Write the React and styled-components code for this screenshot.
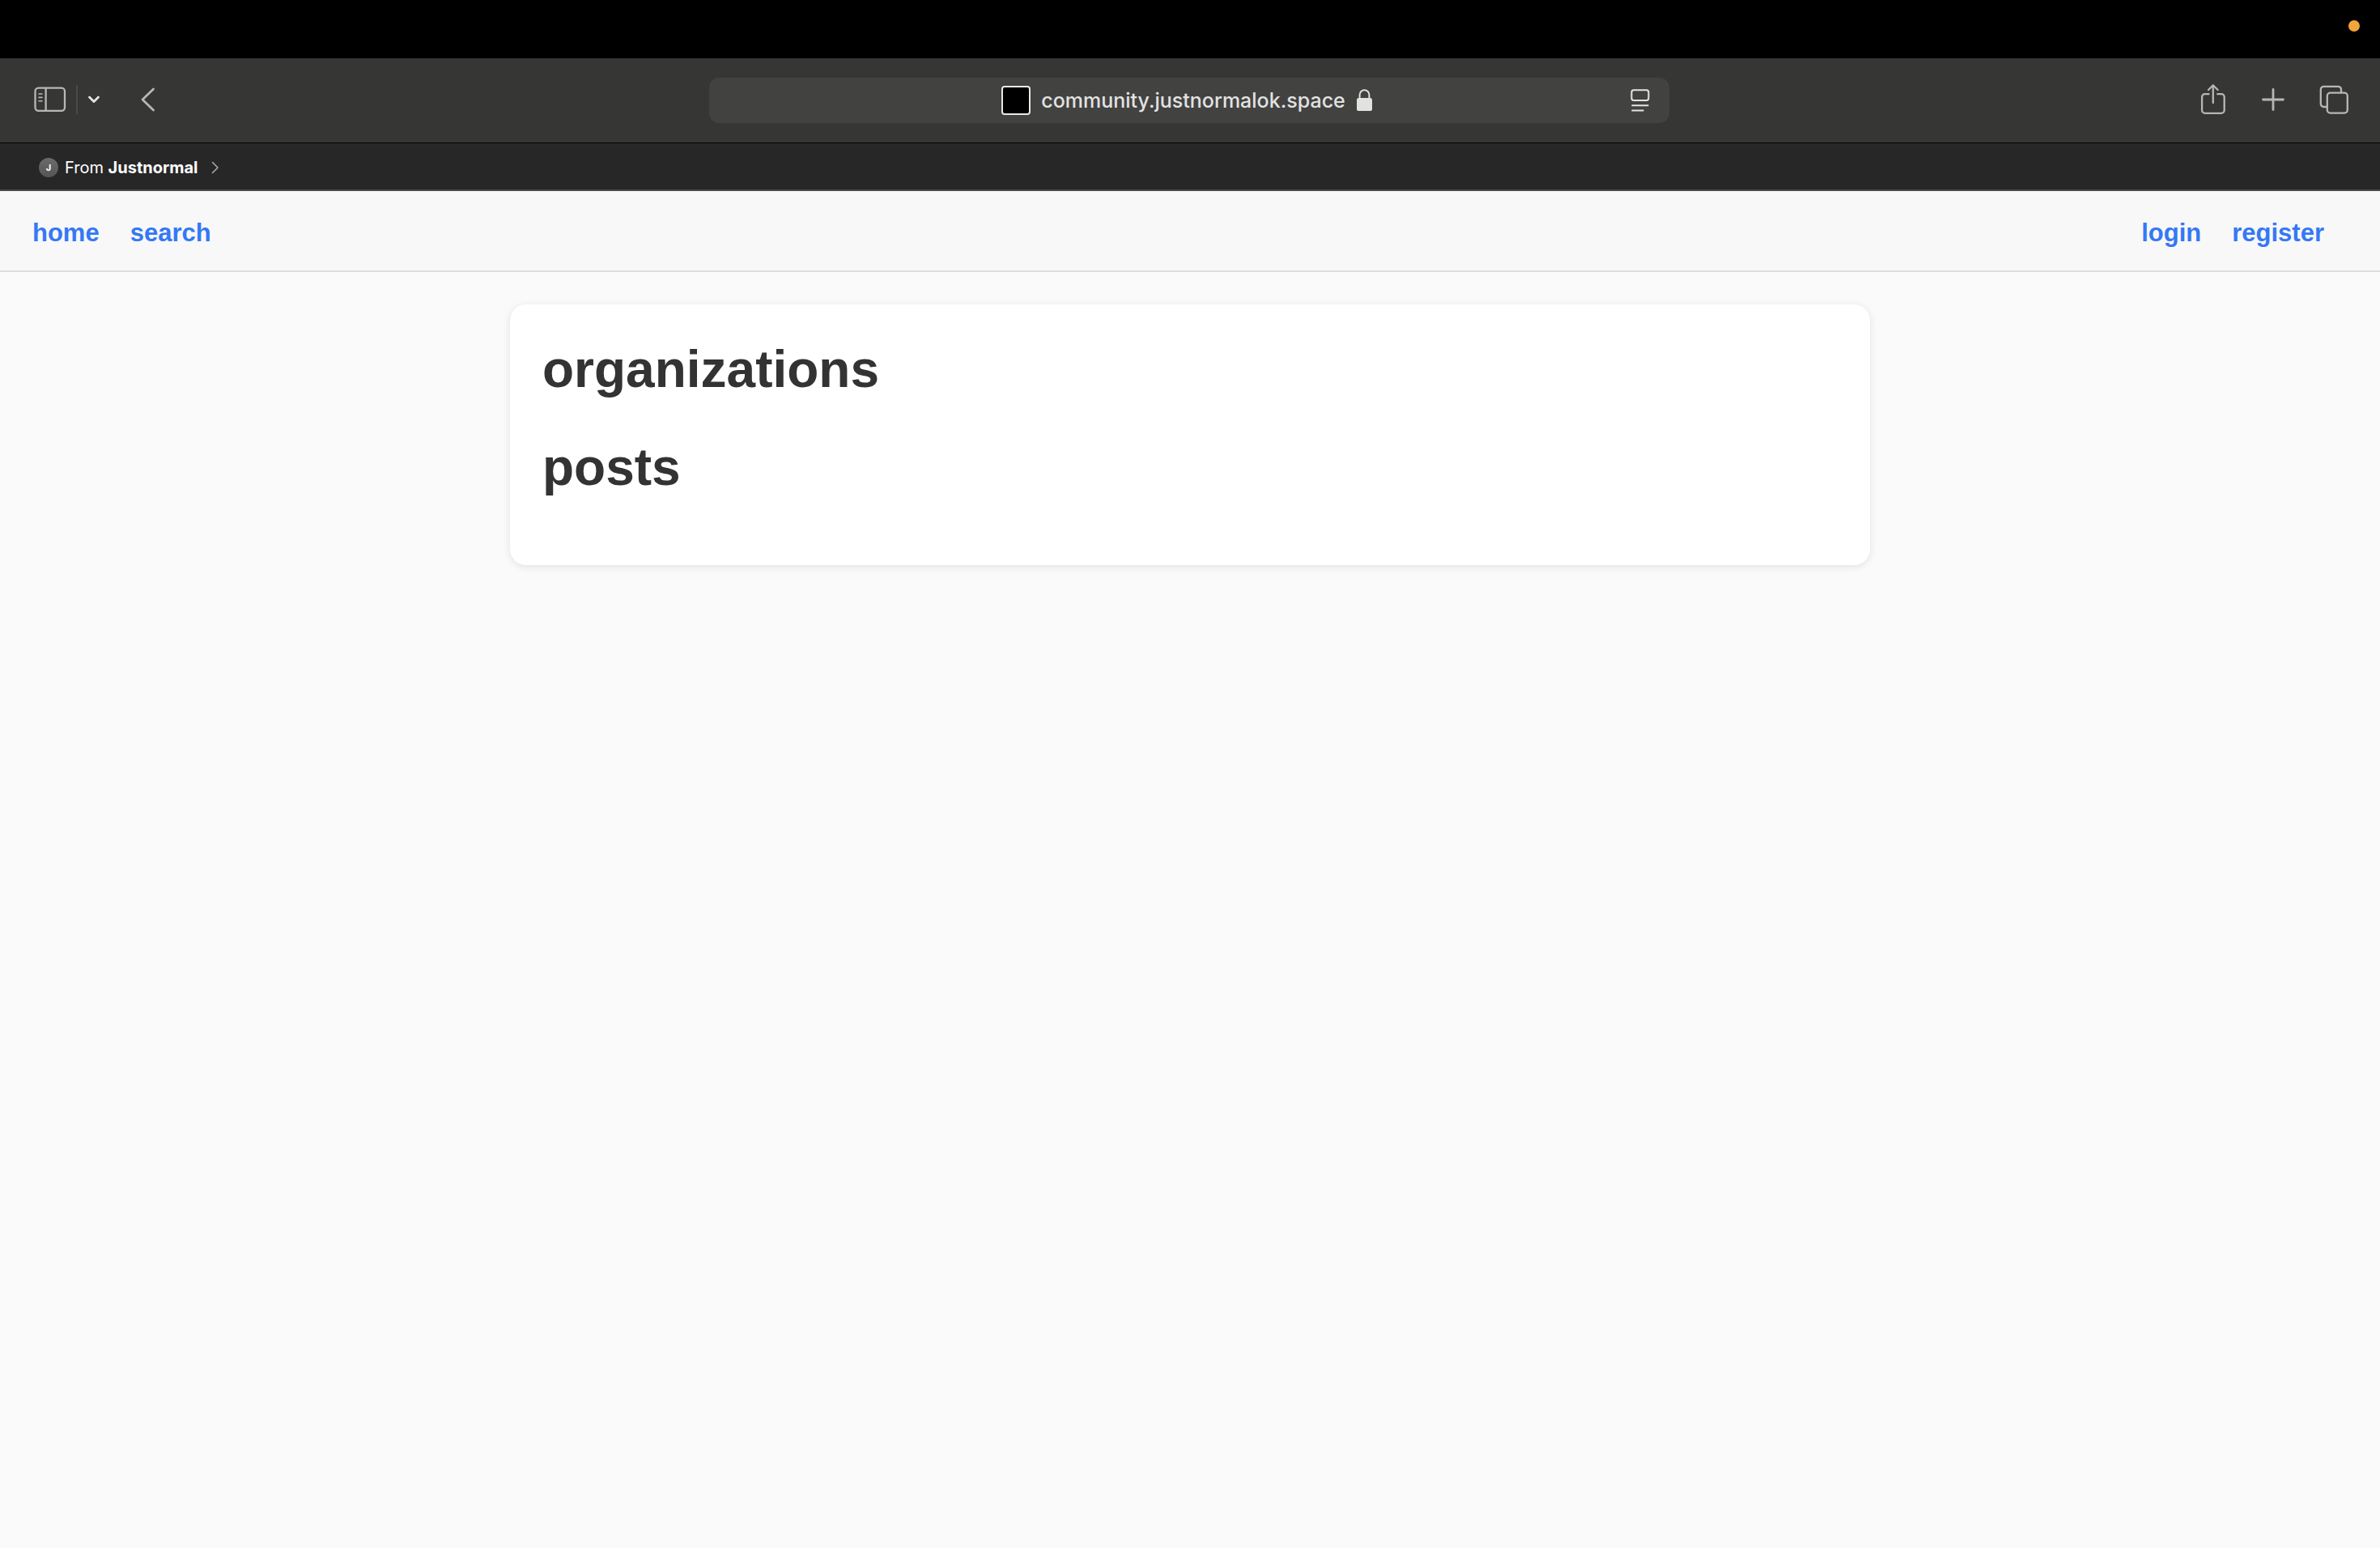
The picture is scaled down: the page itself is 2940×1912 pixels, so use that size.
import React from "react";
import styled, { createGlobalStyle } from "styled-components";

const GlobalStyle = createGlobalStyle`
  * {
    box-sizing: border-box;
  }
  body {
    margin: 0;
    background: #fafafa;
    font-family: "Liberation Sans", Arial, sans-serif;
    color: #333333;
  }
`;

const StatusBar = styled.div`
  display: flex;
  justify-content: flex-end;
  align-items: center;
  height: 72px;
  padding: 0 25px 8px;
  background: #000000;
`;

const RecordingDot = styled.span`
  width: 14px;
  height: 14px;
  border-radius: 50%;
  background: #f3a43b;
`;

const Toolbar = styled.header`
  display: grid;
  grid-template-columns: 1fr minmax(0, 1186px) 1fr;
  align-items: center;
  height: 105px;
  padding: 0 32px 0 30px;
  background: #363634;
  border-bottom: 1px solid #000000;
  font-family: Inter, sans-serif;
`;

const ToolGroup = styled.div`
  display: flex;
  align-items: center;
  justify-content: ${(p) => (p.$end ? "flex-end" : "flex-start")};
  gap: ${(p) => p.$gap}px;
  padding-bottom: 2px;
`;

const IconButton = styled.button`
  display: flex;
  align-items: center;
  justify-content: center;
  width: ${(p) => p.$width || 48}px;
  height: 48px;
  padding: 0;
  border: 0;
  background: none;
  color: ${(p) => (p.$bright ? "#e4e4e4" : "#b7b7b5")};

  svg {
    display: block;
    fill: none;
    stroke: currentColor;
    stroke-linecap: round;
    stroke-linejoin: round;
  }
`;

const Divider = styled.span`
  width: 2px;
  height: 36px;
  background: #4a4a48;
`;

const AddressBar = styled.div`
  display: grid;
  grid-template-columns: 48px 1fr 48px;
  align-items: center;
  height: 56px;
  padding: 0 12px;
  border-radius: 12px;
  background: #424241;
`;

const Address = styled.div`
  grid-column: 2;
  display: flex;
  align-items: center;
  justify-content: center;
  gap: 13px;
  padding-right: 4px;
  color: #e2e2e1;
  font-size: 25px;
  font-weight: 500;
  line-height: 32px;
`;

const SiteIcon = styled.span`
  width: 36px;
  height: 36px;
  border: 2px solid #e9e9e7;
  border-radius: 4px;
  background: #000000;
`;

const SourceBar = styled.div`
  display: flex;
  align-items: center;
  height: 59px;
  padding: 2px 48px 0;
  background: #272727;
  border-bottom: 2px solid #4b4a4a;
  font-family: Inter, sans-serif;
`;

const SourceButton = styled.button`
  display: flex;
  align-items: center;
  padding: 0;
  border: 0;
  background: none;
  color: #ffffff;
  font-family: inherit;
  font-size: 20px;
  line-height: 24px;

  svg {
    margin-left: 16px;
  }
`;

const SourceBadge = styled.span`
  display: flex;
  align-items: center;
  justify-content: center;
  width: 24px;
  height: 24px;
  margin-right: 8px;
  border-radius: 50%;
  background: linear-gradient(#6b6b6b, #555555);
  font-size: 11px;
  font-weight: 700;
`;

const SiteNav = styled.nav`
  display: flex;
  justify-content: space-between;
  align-items: center;
  height: 100px;
  padding: 6px 69px 0 40px;
  background: #f8f8f8;
  border-bottom: 2px solid #dddddd;
`;

const NavGroup = styled.div`
  display: flex;
  gap: 38px;
`;

const NavLink = styled.a`
  color: #3478f6;
  font-size: 31px;
  font-weight: 700;
  line-height: 36px;
  text-decoration: none;
`;

const Card = styled.main`
  max-width: 1680px;
  margin: 40px auto;
  padding: 39px 40px 41px;
  border-radius: 20px;
  background: #ffffff;
  box-shadow: 0 2px 10px rgba(0, 0, 0, 0.1);
`;

const Heading = styled.h1`
  margin: 0 0 39px;
  font-size: 64px;
  font-weight: 700;
  line-height: 82px;
`;

const SidebarIcon = () => (
  <svg width="40" height="32" viewBox="0 0 40 32" strokeWidth="2.3">
    <rect x="1.5" y="1.6" width="36.5" height="28.2" rx="4" />
    <path d="M14.6 2v27.6" />
    <path d="M6 9h4M6 13.4h4M6 17.8h4" strokeWidth="1.6" />
  </svg>
);

const DownIcon = () => (
  <svg width="16" height="12" viewBox="0 0 16 12" strokeWidth="2.8">
    <path d="M2.5 3 8 8.6 13.5 3" />
  </svg>
);

const BackIcon = () => (
  <svg width="20" height="32" viewBox="0 0 20 32" strokeWidth="2.8">
    <path d="M16.5 3 3 16l13.5 13" />
  </svg>
);

const LockIcon = () => (
  <svg width="22" height="30" viewBox="0 0 22 30" aria-hidden="true">
    <rect x="1" y="12" width="19" height="16" rx="2.6" fill="#e2e2e1" />
    <path d="M4.6 13V8.2a5.9 5.9 0 0 1 11.8 0V13" fill="none" stroke="#e2e2e1" strokeWidth="2" />
  </svg>
);

const ReaderIcon = () => (
  <svg width="24" height="30" viewBox="0 0 24 30" strokeWidth="2">
    <rect x="1.5" y="2.3" width="21" height="12.6" rx="2.6" />
    <path d="M1.5 21.3h21M1.5 27.6h15" strokeLinecap="butt" />
  </svg>
);

const ShareIcon = () => (
  <svg width="32" height="40" viewBox="0 0 32 40" strokeWidth="2.3">
    <path d="M11.4 13.2H5.6a3.5 3.5 0 0 0-3.5 3.5V33a3.8 3.8 0 0 0 3.8 3.8h20a3.8 3.8 0 0 0 3.8-3.8V16.7a3.5 3.5 0 0 0-3.5-3.5h-5.8" strokeLinecap="butt" />
    <path d="M15.8 24V2.4M10 8l5.8-5.8L21.6 8" />
  </svg>
);

const PlusIcon = () => (
  <svg width="28" height="28" viewBox="0 0 28 28" strokeWidth="2.8">
    <path d="M14 1.5v25M1.5 14h25" />
  </svg>
);

const TabsIcon = () => (
  <svg width="36" height="36" viewBox="0 0 36 36" strokeWidth="2.3">
    <path d="M9.2 27H5.6a3.8 3.8 0 0 1-3.8-3.8V5.6a3.8 3.8 0 0 1 3.8-3.8h17.6A3.8 3.8 0 0 1 27 5.6v3.6" />
    <rect x="9.8" y="9.6" width="25" height="25" rx="3.8" />
  </svg>
);

const ForwardIcon = () => (
  <svg width="10" height="16" viewBox="0 0 10 16" fill="none" stroke="#a8a8a8" strokeWidth="1.6">
    <path d="M1.5 1.5 8 8l-6.5 6.5" strokeLinecap="round" strokeLinejoin="round" />
  </svg>
);

export default function App() {
  return (
    <>
      <GlobalStyle />
      <StatusBar>
        <RecordingDot />
      </StatusBar>
      <Toolbar>
        <ToolGroup $gap={0}>
          <IconButton $width={64} aria-label="Show sidebar"><SidebarIcon /></IconButton>
          <Divider />
          <IconButton $bright $width={40} aria-label="Tab groups"><DownIcon /></IconButton>
          <IconButton $width={94} aria-label="Back"><BackIcon /></IconButton>
        </ToolGroup>
        <AddressBar>
          <Address>
            <SiteIcon />
            <span>community.justnormalok.space</span>
            <LockIcon />
          </Address>
          <IconButton $bright aria-label="Show reader"><ReaderIcon /></IconButton>
        </AddressBar>
        <ToolGroup $end $gap={26}>
          <IconButton aria-label="Share"><ShareIcon /></IconButton>
          <IconButton aria-label="New tab"><PlusIcon /></IconButton>
          <IconButton $width={50} aria-label="Show all tabs"><TabsIcon /></IconButton>
        </ToolGroup>
      </Toolbar>
      <SourceBar>
        <SourceButton>
          <SourceBadge>J</SourceBadge>
          <span>From <strong>Justnormal</strong></span>
          <ForwardIcon />
        </SourceButton>
      </SourceBar>
      <SiteNav>
        <NavGroup>
          <NavLink href="#home">home</NavLink>
          <NavLink href="#search">search</NavLink>
        </NavGroup>
        <NavGroup>
          <NavLink href="#login">login</NavLink>
          <NavLink href="#register">register</NavLink>
        </NavGroup>
      </SiteNav>
      <Card>
        <Heading>organizations</Heading>
        <Heading>posts</Heading>
      </Card>
    </>
  );
}
